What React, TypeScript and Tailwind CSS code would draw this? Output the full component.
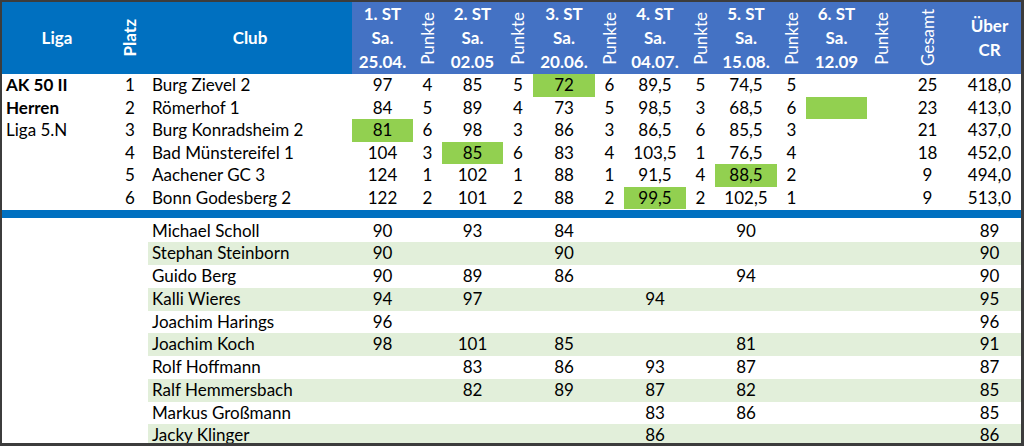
import React from "react";

const GRID =
  "grid grid-cols-[110px_36px_204px_61px_29px_61px_30px_62px_29px_62px_29px_62px_29px_61px_30px_61px_63px]";

type Team = {
  liga: string;
  ligaBold: boolean;
  platz: string;
  club: string;
  vals: string[]; // 12 values: st1,p1,...,st6,p6
  gesamt: string;
  cr: string;
  hl: number; // index into vals highlighted
};

const teams: Team[] = [
  { liga: "AK 50 II", ligaBold: true, platz: "1", club: "Burg Zievel 2", vals: ["97", "4", "85", "5", "72", "6", "89,5", "5", "74,5", "5", "", ""], gesamt: "25", cr: "418,0", hl: 4 },
  { liga: "Herren", ligaBold: true, platz: "2", club: "Römerhof 1", vals: ["84", "5", "89", "4", "73", "5", "98,5", "3", "68,5", "6", "", ""], gesamt: "23", cr: "413,0", hl: 10 },
  { liga: "Liga 5.N", ligaBold: false, platz: "3", club: "Burg Konradsheim 2", vals: ["81", "6", "98", "3", "86", "3", "86,5", "6", "85,5", "3", "", ""], gesamt: "21", cr: "437,0", hl: 0 },
  { liga: "", ligaBold: false, platz: "4", club: "Bad Münstereifel 1", vals: ["104", "3", "85", "6", "83", "4", "103,5", "1", "76,5", "4", "", ""], gesamt: "18", cr: "452,0", hl: 2 },
  { liga: "", ligaBold: false, platz: "5", club: "Aachener GC 3", vals: ["124", "1", "102", "1", "88", "1", "91,5", "4", "88,5", "2", "", ""], gesamt: "9", cr: "494,0", hl: 8 },
  { liga: "", ligaBold: false, platz: "6", club: "Bonn Godesberg 2", vals: ["122", "2", "101", "2", "88", "2", "99,5", "2", "102,5", "1", "", ""], gesamt: "9", cr: "513,0", hl: 6 },
];

type Player = { name: string; st: string[]; cr: string };

const players: Player[] = [
  { name: "Michael Scholl", st: ["90", "93", "84", "", "90", ""], cr: "89" },
  { name: "Stephan Steinborn", st: ["90", "", "90", "", "", ""], cr: "90" },
  { name: "Guido Berg", st: ["90", "89", "86", "", "94", ""], cr: "90" },
  { name: "Kalli Wieres", st: ["94", "97", "", "94", "", ""], cr: "95" },
  { name: "Joachim Harings", st: ["96", "", "", "", "", ""], cr: "96" },
  { name: "Joachim Koch", st: ["98", "101", "85", "", "81", ""], cr: "91" },
  { name: "Rolf Hoffmann", st: ["", "83", "86", "93", "87", ""], cr: "87" },
  { name: "Ralf Hemmersbach", st: ["", "82", "89", "87", "82", ""], cr: "85" },
  { name: "Markus Großmann", st: ["", "", "", "83", "86", ""], cr: "85" },
  { name: "Jacky Klinger", st: ["", "", "", "86", "", ""], cr: "86" },
];

const stHeaders = [
  ["1. ST", "Sa.", "25.04."],
  ["2. ST", "Sa.", "02.05"],
  ["3. ST", "Sa.", "20.06."],
  ["4. ST", "Sa.", "04.07."],
  ["5. ST", "Sa.", "15.08."],
  ["6. ST", "Sa.", "12.09"],
];

function Vertical({ text, bold }: { text: string; bold?: boolean }) {
  return (
    <span className={`[writing-mode:vertical-rl] rotate-180 whitespace-nowrap ${bold ? "font-bold" : "font-normal"}`}>
      {text}
    </span>
  );
}

export default function App() {
  return (
    <div
      className="w-[1024px] h-[446px] overflow-hidden bg-white border-l-2 border-t-2 border-r-[3px] border-b-[3px] border-[#3c3c3c] text-black text-[17px]"
      style={{ fontFamily: "Lato, 'Noto Sans', sans-serif" }}
    >
      {/* Header */}
      <div className={`${GRID} h-[72px] text-white leading-[24px]`}>
        <div className="bg-[#0070c0] flex items-center justify-center font-bold">Liga</div>
        <div className="bg-[#0070c0] flex items-center justify-center">
          <Vertical text="Platz" bold />
        </div>
        <div className="bg-[#0070c0] flex items-center justify-center font-bold">Club</div>
        {stHeaders.map((h, i) => (
          <React.Fragment key={i}>
            <div className="bg-[#4472c4] flex flex-col items-center justify-center font-bold">
              {h.map((l, j) => (
                <span key={j}>{l}</span>
              ))}
            </div>
            <div className="bg-[#4472c4] flex items-center justify-center">
              <Vertical text="Punkte" />
            </div>
          </React.Fragment>
        ))}
        <div className="bg-[#4472c4] flex items-center justify-center">
          <Vertical text="Gesamt" />
        </div>
        <div className="bg-[#4472c4] flex flex-col items-center justify-center font-bold">
          <span>Über</span>
          <span>CR</span>
        </div>
      </div>

      {/* Team rows */}
      {teams.map((t, r) => (
        <div key={r} className={`${GRID} h-[22.5px] leading-[22.5px]`}>
          <div className={`pl-[4px] whitespace-nowrap ${t.ligaBold ? "font-bold" : ""}`}>{t.liga}</div>
          <div className="text-center">{t.platz}</div>
          <div className="pl-[4px] whitespace-nowrap">{t.club}</div>
          {t.vals.map((v, i) => (
            <div key={i} className={`text-center ${i === t.hl ? "bg-[#92d050]" : ""}`}>
              {v}
            </div>
          ))}
          <div className="text-center">{t.gesamt}</div>
          <div className="text-center">{t.cr}</div>
        </div>
      ))}

      {/* Separator bar */}
      <div className="h-[8px] bg-[#0070c0] mt-[0.5px]" />

      {/* Player rows */}
      <div className="mt-[2px]">
        {players.map((p, r) => {
          const stripe = r % 2 === 1 ? "bg-[#e2efda]" : "";
          return (
            <div key={r} className={`${GRID} h-[22.75px] leading-[22.75px]`}>
              <div />
              <div />
              <div className={`pl-[4px] whitespace-nowrap ${stripe}`}>{p.name}</div>
              {p.st.map((v, i) => (
                <React.Fragment key={i}>
                  <div className={`text-center ${stripe}`}>{v}</div>
                  <div className={stripe} />
                </React.Fragment>
              ))}
              <div className={stripe} />
              <div className={`text-center ${stripe}`}>{p.cr}</div>
            </div>
          );
        })}
      </div>
    </div>
  );
}
